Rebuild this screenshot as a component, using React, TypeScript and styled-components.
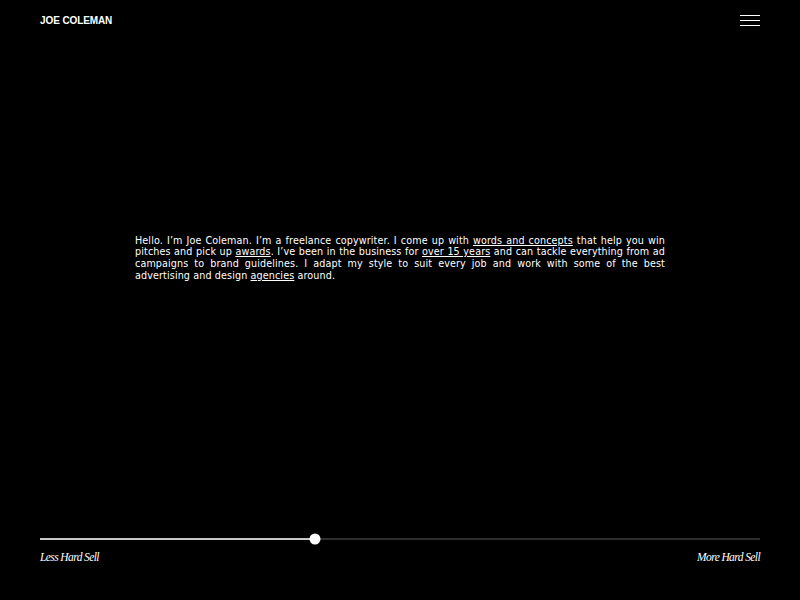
import React, { FC, useState } from "react";
import styled, { createGlobalStyle } from "styled-components";

const GlobalStyle = createGlobalStyle`
  html, body {
    margin: 0;
    padding: 0;
    background: #000;
    color: #fff;
  }
  #root {
    min-height: 100vh;
  }
`;

const Page = styled.div`
  height: 600px;
  display: flex;
  flex-direction: column;
  padding: 0 40px;
  box-sizing: border-box;
  background: #000;
`;

const Header = styled.header`
  height: 40px;
  display: flex;
  align-items: center;
  justify-content: space-between;
`;

const Brand = styled.a`
  font-family: "Liberation Sans", Arial, sans-serif;
  font-weight: 700;
  font-size: 10px;
  letter-spacing: -0.1px;
  color: #fff;
  text-decoration: none;
`;

const MenuButton = styled.button`
  width: 20px;
  height: 11px;
  padding: 0;
  border: 0;
  background: none;
  display: flex;
  flex-direction: column;
  justify-content: space-between;
  cursor: pointer;
`;

const MenuLine = styled.span`
  display: block;
  height: 1px;
  background: #fff;
`;

const Main = styled.main`
  flex: 1;
  display: flex;
  align-items: center;
  justify-content: center;
  padding-bottom: 62px;
`;

const Intro = styled.p`
  width: 530px;
  margin: 0;
  font-family: "DejaVu Sans", "Noto Sans", sans-serif;
  font-size: 9.6px;
  letter-spacing: 0.12px;
  line-height: 11.7px;
  text-align: justify;
  color: #fff;

  a {
    color: #fff;
    text-decoration: underline;
    text-underline-offset: 1px;
  }
`;

const SliderArea = styled.div`
  padding-bottom: 37px;
`;

const Track = styled.div`
  position: relative;
  height: 2px;
  background: #2e2e2e;
  cursor: pointer;
`;

const Fill = styled.div`
  height: 2px;
  background: #c8c8c8;
`;

const Thumb = styled.div`
  position: absolute;
  top: 50%;
  width: 11px;
  height: 11px;
  border-radius: 50%;
  background: #fff;
  transform: translate(-50%, -50%);
`;

const Labels = styled.div`
  display: flex;
  justify-content: space-between;
  margin-top: 11px;
  font-family: "Liberation Serif", "Times New Roman", serif;
  font-style: italic;
  font-size: 11.5px;
  letter-spacing: -0.6px;
  color: #fff;
`;

const App: FC = () => {
  const [value] = useState(0.382);

  return (
    <>
      <GlobalStyle />
      <Page>
        <Header>
          <Brand href="#">JOE COLEMAN</Brand>
          <MenuButton aria-label="menu">
            <MenuLine />
            <MenuLine />
            <MenuLine />
          </MenuButton>
        </Header>

        <Main>
          <Intro>
            Hello. I’m Joe Coleman. I’m a freelance copywriter. I come up with{" "}
            <a href="#">words and concepts</a> that help you win pitches and
            pick up <a href="#">awards</a>. I’ve been in the business for{" "}
            <a href="#">over 15 years</a> and can tackle everything from ad
            campaigns to brand guidelines. I adapt my style to suit every job
            and work with some of the best advertising and design{" "}
            <a href="#">agencies</a> around.
          </Intro>
        </Main>

        <SliderArea>
          <Track>
            <Fill style={{ width: `${value * 100}%` }} />
            <Thumb style={{ left: `${value * 100}%` }} />
          </Track>
          <Labels>
            <span>Less Hard Sell</span>
            <span>More Hard Sell</span>
          </Labels>
        </SliderArea>
      </Page>
    </>
  );
};

export default App;
